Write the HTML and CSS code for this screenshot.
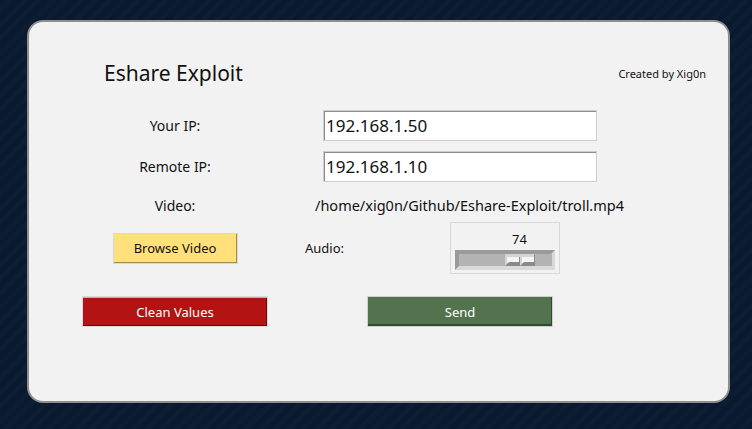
FILE: index.html
```html
<!DOCTYPE html>
<html>
<head>
<meta charset="utf-8">
<link rel="stylesheet" href="styles.css">
</head>
<body>
<div class="panel">
  <div class="header">
    <h1 class="title">Eshare Exploit</h1>
    <span class="credit">Created by Xig0n</span>
  </div>
  <div class="row row-ip">
    <label class="label">Your IP:</label>
    <div class="input">192.168.1.50</div>
  </div>
  <div class="row row-remote">
    <label class="label">Remote IP:</label>
    <div class="input">192.168.1.10</div>
  </div>
  <div class="row row-video">
    <span class="label">Video:</span>
    <span class="path">/home/xig0n/Github/Eshare-Exploit/troll.mp4</span>
  </div>
  <div class="row row-media">
    <div class="cell"><button class="btn btn-browse">Browse Video</button></div>
    <span class="audio-label">Audio:</span>
    <div class="scale">
      <div class="scale-value">74</div>
      <svg class="scale-track" width="100" height="20" viewBox="0 0 100 20">
        <rect x="0" y="0" width="100" height="20" fill="#d9d9d9"/>
        <polygon points="0,0 100,0 96,4 4,4 4,16 0,20" fill="#9a9a9a"/>
        <rect x="4" y="4" width="93" height="12" fill="#b3b3b3"/>
        <rect x="50" y="4" width="30" height="12" fill="#d4d4d4"/>
        <rect x="52" y="7" width="12" height="6" fill="#f4f4f4"/>
        <rect x="67" y="7" width="12" height="6" fill="#f4f4f4"/>
        <polygon points="50,16 54,12 64,12 64,7 65,7 65,16" fill="#8a8a8a"/>
        <polygon points="65,16 69,12 79,12 79,5 80,4 80,16" fill="#8a8a8a"/>
      </svg>
    </div>
  </div>
  <div class="row row-actions">
    <button class="btn btn-clean">Clean Values</button>
    <button class="btn btn-send">Send</button>
  </div>
</div>
</body>
</html>
```
FILE: styles.css
```css
html, body {
  margin: 0;
  padding: 0;
}
body {
  width: 752px;
  height: 429px;
  overflow: hidden;
  font-family: "Noto Sans", "Open Sans", sans-serif;
  color: #111;
  background-color: #0a1a2f;
  background-image: repeating-linear-gradient(-45deg, #09192e 0px, #09192e 5px, #0c1d34 5px, #0c1d34 10px);
  padding: 20px 0 0 27px;
  box-sizing: border-box;
}
.panel {
  box-sizing: border-box;
  width: 703px;
  height: 383px;
  background: #f2f2f2;
  border: 2px solid #8e8e8e;
  border-radius: 16px;
  padding: 39px 21px 0 53px;
}
.header {
  display: flex;
  align-items: center;
  justify-content: space-between;
  height: 24px;
  padding-left: 22px;
}
.title {
  margin: 0;
  font-size: 21px;
  font-weight: 400;
  line-height: 24px;
}
.credit {
  font-size: 11px;
  margin-top: 1px;
  margin-right: 1px;
}
.row {
  display: flex;
  align-items: center;
}
.label, .cell {
  width: 186px;
  text-align: center;
  font-size: 14px;
  flex: none;
}
.row-ip {
  margin-top: 25px;
}
.row-remote {
  margin-top: 10px;
}
.input {
  box-sizing: border-box;
  margin-left: 55px;
  width: 274px;
  height: 31px;
  background: #fff;
  border: 1px solid #cdcdcd;
  box-shadow: inset 1px 1px 0 #8c8c8c;
  font-size: 17px;
  line-height: 29px;
  padding-left: 2px;
}
.row-video {
  margin-top: 13px;
  height: 20px;
}
.path {
  margin-left: 47px;
  font-size: 14.5px;
}
.row-media {
  margin-top: 7px;
}
.btn {
  box-sizing: border-box;
  height: 31px;
  font-family: "Noto Sans", "Open Sans", sans-serif;
  font-size: 13px;
  padding: 0;
  cursor: default;
}
.btn-browse {
  width: 125px;
  background: #ffe07a;
  border: 1px solid #d7d7d7;
  box-shadow: inset -1px -1px 0 #a58d45;
  color: #111;
}
.audio-label {
  margin-left: 37px;
  font-size: 13px;
  width: 145px;
  flex: none;
}
.scale {
  box-sizing: border-box;
  width: 110px;
  height: 52px;
  border: 1px solid #d8d8d8;
  padding: 0 0 0 4px;
  flex: none;
}
.scale-value {
  height: 27px;
  line-height: 32px;
  font-size: 13px;
  padding-left: 57px;
}
.scale-track {
  display: block;
}
.row-actions {
  margin-top: 22px;
}
.btn-clean {
  width: 186px;
  background: #b31313;
  color: #fff;
  border: 1px solid #d9d9d9;
  box-shadow: inset 0 1px 0 #e8a0a0, inset -1px -1px 0 #6a0a0a;
}
.btn-send {
  margin-left: 99px;
  width: 186px;
  background: #52734d;
  color: #fff;
  border: 1px solid #cfcfcf;
  box-shadow: inset -1px -2px 0 #2f4a2c;
}
```
